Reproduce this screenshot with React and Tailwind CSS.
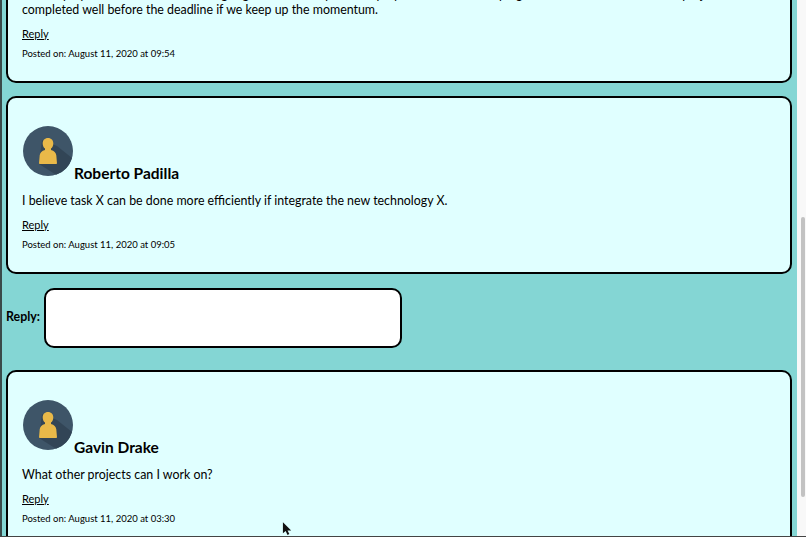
import React from "react";

const comments = [
  {
    name: "Roberto Padilla",
    text: "I believe task X can be done more efficiently if integrate the new technology X.",
    posted: "August 11, 2020 at 09:05",
  },
  {
    name: "Gavin Drake",
    text: "What other projects can I work on?",
    posted: "August 11, 2020 at 03:30",
  },
];

const Avatar = () => (
  <svg viewBox="0 0 50 50" className="ml-[1px] w-[50px] h-[50px] shrink-0">
    <circle cx="25" cy="25" r="25" fill="#3e5568" />
    <path d="M19 14 L34 20 L49 32 A25 25 0 0 1 33 48.700 L16 38 Z" fill="#324556" />
    <path
      d="M25 12c-3.300 0-5.300 2.400-5.300 5.400 0 2.300.9 4 2.300 5.100v1.600c-3.200 1-4.900 2.500-5.300 5.200L16 37.200c0 .5.300.8.800.8h16.400c.5 0 .8-.3.800-.8l-.7-7.900c-.4-2.700-2.100-4.200-5.300-5.200v-1.600c1.400-1.100 2.300-2.800 2.300-5.100 0-3-2-5.400-5.300-5.400z"
      fill="#e9b949"
    />
  </svg>
);

const Meta = ({ posted }) => (
  <>
    <a href="#" className="block mt-[9px] text-[11px] leading-[16px] underline">
      Reply
    </a>
    <p className="mt-[4px] text-[9.5px] leading-[16px]">Posted on: {posted}</p>
  </>
);

const Comment = ({ comment, className }) => (
  <div className={`rounded-[10px] border-2 border-black bg-[#e0ffff] pl-[14px] pr-4 pt-[28px] ${className}`}>
    <div className="flex items-end">
      <Avatar />
      <h3 className="ml-[1px] -mb-[6px] text-[15.5px] leading-[18px] font-bold">{comment.name}</h3>
    </div>
    <p className="mt-[17px] text-[12.4px] leading-[15px]">{comment.text}</p>
    <Meta posted={comment.posted} />
  </div>
);

export default function App() {
  return (
    <div className="relative flex h-[537px] overflow-hidden border-b border-[#444] text-black [font-family:'Lato',sans-serif]">
      <main className="flex-1 overflow-hidden border-l-2 border-[#3a4a4a] bg-[#84d6d4]">
        <div className="-mt-[20px] pl-[4px] pr-[5px]">
          <div className="h-[103px] rounded-[10px] border-2 border-black bg-[#e0ffff] pl-[14px] pr-4 pt-[5px]">
            <p className="text-[12.4px] leading-[15px]">
              Our employee team has been working together smoothly. The employees have been keeping each other accountable. Our project can be completed well before the deadline if we keep up the momentum.
            </p>
            <Meta posted="August 11, 2020 at 09:54" />
          </div>

          <Comment comment={comments[0]} className="mt-[13px] h-[178px]" />

          <div className="mt-[14px] flex items-center gap-[3px]">
            <label className="-mt-[2px] w-[35px] whitespace-nowrap text-[12.4px] font-bold">Reply:</label>
            <div className="h-[60px] w-[358px] rounded-[10px] border-2 border-black bg-white" />
          </div>

          <Comment comment={comments[1]} className="mt-[22px] h-[178px]" />
        </div>
      </main>

      <div className="w-[9px] shrink-0 bg-[#f8f8f8] pl-[4px] pr-[1px] pt-[217px]">
        <div className="h-[280px] rounded-full bg-[#c2c2c2]" />
      </div>

      <svg viewBox="0 0 12 16" className="absolute left-[282px] top-[522px] w-[11px] h-[15px]">
        <path d="M1 0 L1 12 L4 9.500 L6 14 L8 13 L6 9 L10 9 Z" fill="#111" />
      </svg>
    </div>
  );
}
